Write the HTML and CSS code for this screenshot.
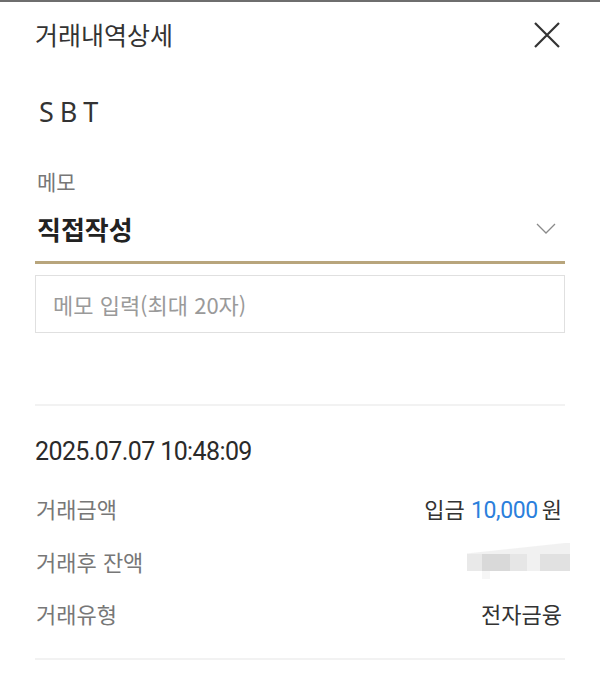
FILE: index.html
```html
<!DOCTYPE html>
<html lang="ko">
<head>
<meta charset="utf-8">
<title>거래내역상세</title>
<link rel="stylesheet" href="styles.css">
</head>
<body>
<div class="page">
  <header class="header">
    <h1 class="title">거래내역상세</h1>
    <button class="close" aria-label="닫기">
      <svg width="26" height="26" viewBox="0 0 26 26"><path d="M1 1 L25 25 M25 1 L1 25" stroke="#333" stroke-width="2.2" fill="none"/></svg>
    </button>
  </header>

  <div class="bank">SBT</div>

  <div class="memo-label">메모</div>
  <div class="select">
    <span class="select-value">직접작성</span>
    <svg class="chevron" width="20" height="11" viewBox="0 0 20 11"><path d="M1 1 L10 10 L19 1" stroke="#8a8a8a" stroke-width="1.3" fill="none"/></svg>
  </div>
  <div class="input">메모 입력(최대 20자)</div>

  <div class="divider"></div>

  <div class="date">2025.07.07 10:48:09</div>

  <div class="rows">
    <div class="row">
      <span class="label">거래금액</span>
      <span class="value">입금 <span class="amount">10,000</span><span class="won">원</span></span>
    </div>
    <div class="row">
      <span class="label">거래후 잔액</span>
      <span class="blur">
        <span class="blur-top"></span>
        <span class="blur-mid">
          <span class="c c1"></span><span class="c c2"></span><span class="c c3"></span><span class="c c4"></span><span class="c c5"></span>
        </span>
        <span class="blur-bot"></span>
      </span>
    </div>
    <div class="row">
      <span class="label">거래유형</span>
      <span class="value">전자금융</span>
    </div>
  </div>

  <div class="divider divider-bottom"></div>
</div>
</body>
</html>
```

FILE: styles.css
```css
* { box-sizing: border-box; }
html, body { margin: 0; padding: 0; background: #fff; }
body {
  font-family: "Noto Sans CJK KR", "Noto Sans", sans-serif;
  color: #333;
}
.page {
  border-top: 2px solid #6e6e6e;
  padding: 0 35px;
}
.header {
  height: 70px;
  padding-bottom: 5px;
  display: flex;
  align-items: center;
  justify-content: space-between;
}
.title {
  margin: 0;
  font-size: 25px;
  font-weight: 400;
  color: #333;
  line-height: 1;
  padding-left: 0;
}
.close {
  border: 0;
  background: none;
  padding: 0;
  margin-right: 5px;
  width: 26px;
  height: 26px;
  display: flex;
}
.bank {
  height: 80px;
  line-height: 80px;
  font-family: "Noto Sans", sans-serif;
  font-size: 27px;
  letter-spacing: 6px;
  padding-left: 4px;
  color: #333;
}
.memo-label {
  margin-top: 14px;
  height: 30px;
  line-height: 30px;
  font-size: 21px;
  color: #777;
  padding-left: 2px;
}
.select {
  height: 68px;
  border-bottom: 3px solid #b8a57c;
  display: flex;
  align-items: center;
  justify-content: space-between;
  padding-left: 2px;
  padding-right: 9px;
}
.select-value {
  font-size: 26px;
  font-weight: 700;
  color: #222;
  line-height: 1;
}
.input {
  margin-top: 11px;
  height: 58px;
  border: 1px solid #e0e0e0;
  display: flex;
  align-items: center;
  padding-left: 17px;
  font-size: 22px;
  color: #9a9a9a;
}
.divider {
  margin-top: 71px;
  height: 2px;
  background: #f2f2f2;
}
.date {
  padding-top: 30px;
  height: 62px;
  line-height: 32px;
  font-family: Roboto, "Noto Sans", sans-serif;
  font-size: 25px;
  letter-spacing: -0.6px;
  color: #2a2a2a;
}
.rows {
  margin-top: 14px;
  display: flex;
  flex-direction: column;
}
.row {
  height: 52.5px;
  display: flex;
  align-items: center;
  justify-content: space-between;
}
.label {
  font-size: 22px;
  color: #777;
  padding-left: 1px;
}
.value {
  font-size: 22px;
  color: #333;
  padding-right: 3px;
}
.amount {
  font-family: Roboto, "Noto Sans", sans-serif;
  font-size: 23px;
  color: #2b7fdc;
  letter-spacing: -0.4px;
}
.won { margin-left: 4px; }
.blur {
  width: 103px;
  margin-right: -5px;
  display: flex;
  flex-direction: column;
}
.blur-top {
  height: 11px;
  background: linear-gradient(to bottom right, #fff 0%, #fff 45%, #f1f1f1 50%, #f1f1f1 100%);
}
.blur-mid {
  height: 17px;
  display: flex;
}
.c { height: 100%; }
.c1 { width: 15px; background: #e9e9e9; }
.c2 { width: 28px; background: #d9d9d9; }
.c3 { width: 17px; background: #e6e6e6; }
.c4 { width: 13px; background: #f1f1f1; }
.c5 { width: 30px; background: #e1e1e1; }
.blur-bot {
  height: 8px;
  width: 8px;
  margin-left: 15px;
  background: #f6f6f6;
}
.divider-bottom {
  margin-top: 18px;
}
```
